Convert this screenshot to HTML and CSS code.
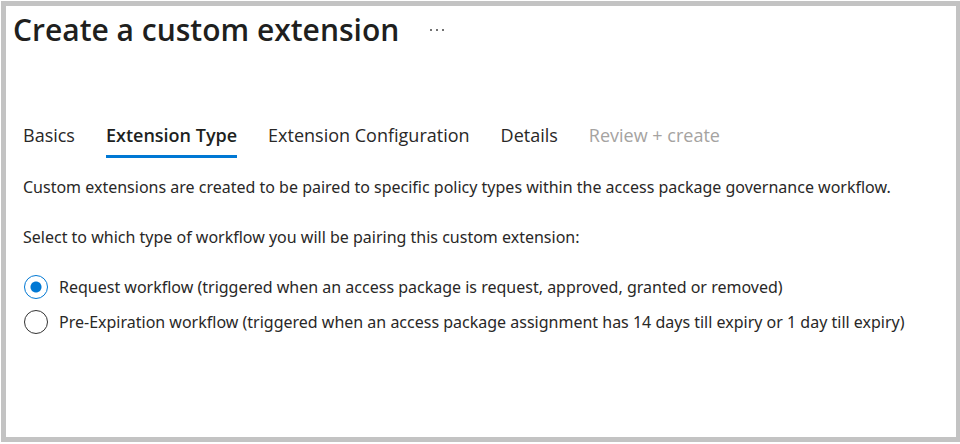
FILE: index.html
```html
<!DOCTYPE html>
<html lang="en">
<head>
<meta charset="utf-8">
<title>Create a custom extension</title>
<link rel="stylesheet" href="styles.css">
</head>
<body>
<main class="page">
  <header class="header">
    <h1 class="title">Create a custom extension</h1>
    <button class="more" type="button" aria-label="More options">
      <svg width="16" height="4" viewBox="0 0 16 4" aria-hidden="true"><circle cx="2" cy="2" r="1"/><circle cx="8" cy="2" r="1"/><circle cx="14" cy="2" r="1"/></svg>
    </button>
  </header>
  <nav class="tabs">
    <a class="tab" href="#basics">Basics</a>
    <a class="tab active" href="#type" aria-current="step">Extension Type</a>
    <a class="tab" href="#configuration">Extension Configuration</a>
    <a class="tab" href="#details">Details</a>
    <a class="tab disabled" href="#review" aria-disabled="true">Review + create</a>
  </nav>
  <form class="content">
    <p class="text">Custom extensions are created to be paired to specific policy types within the access package governance workflow.</p>
    <fieldset class="choices">
      <legend class="text">Select to which type of workflow you will be pairing this custom extension:</legend>
      <label class="choice"><input class="radio" type="radio" name="workflow" checked><span>Request workflow (triggered when an access package is request, approved, granted or removed)</span></label>
      <label class="choice"><input class="radio" type="radio" name="workflow"><span>Pre-Expiration workflow (triggered when an access package assignment has 14 days till expiry or 1 day till expiry)</span></label>
    </fieldset>
  </form>
</main>
</body>
</html>
```
FILE: styles.css
```css
* { box-sizing: border-box; }
body {
  display: flex;
  min-height: 100vh;
  margin: 0;
  padding: 1px 0 2px 1px;
  background: #fff;
  color: #292827;
  font: 16px/24px "Segoe UI", "Open Sans", sans-serif;
}
.page {
  flex: 1;
  min-width: 0;
  border: 5px solid #c3c3c3;
  border-right-width: 4px;
}
.header { display: flex; align-items: center; gap: 30px; padding-left: 7px; }
.title { margin: 0; color: #201f1e; font-size: 30px; line-height: 48px; font-weight: 600; }
.more { display: flex; padding: 0; border: 0; background: none; fill: #444; }
.tabs { display: flex; gap: 31px; margin-top: 65px; padding: 0 17px; font-size: 18px; }
.tab { padding: 4px 0 8px; border-bottom: 3px solid transparent; color: inherit; text-decoration: none; white-space: nowrap; }
.active { border-color: #0078d4; color: #201f1e; font-weight: 600; }
.disabled { color: #a5a3a1; }
.content { padding: 17px; font-family: "Segoe UI", "Noto Sans", sans-serif; }
.text { margin: 0; padding: 0; }
.choices { min-width: 0; margin: 26px 0 0; padding: 0; border: 0; }
.choice { display: flex; align-items: center; gap: 11px; margin-top: 11px; }
.text + .choice { margin-top: 26px; }
.radio { appearance: none; flex: none; width: 24px; height: 24px; margin: 0 0 0 1px; border: 1px solid #333; border-radius: 50%; }
.radio:checked { border-color: #0078d4; background: radial-gradient(circle, #0078d4 5px, transparent 6px); }
```
